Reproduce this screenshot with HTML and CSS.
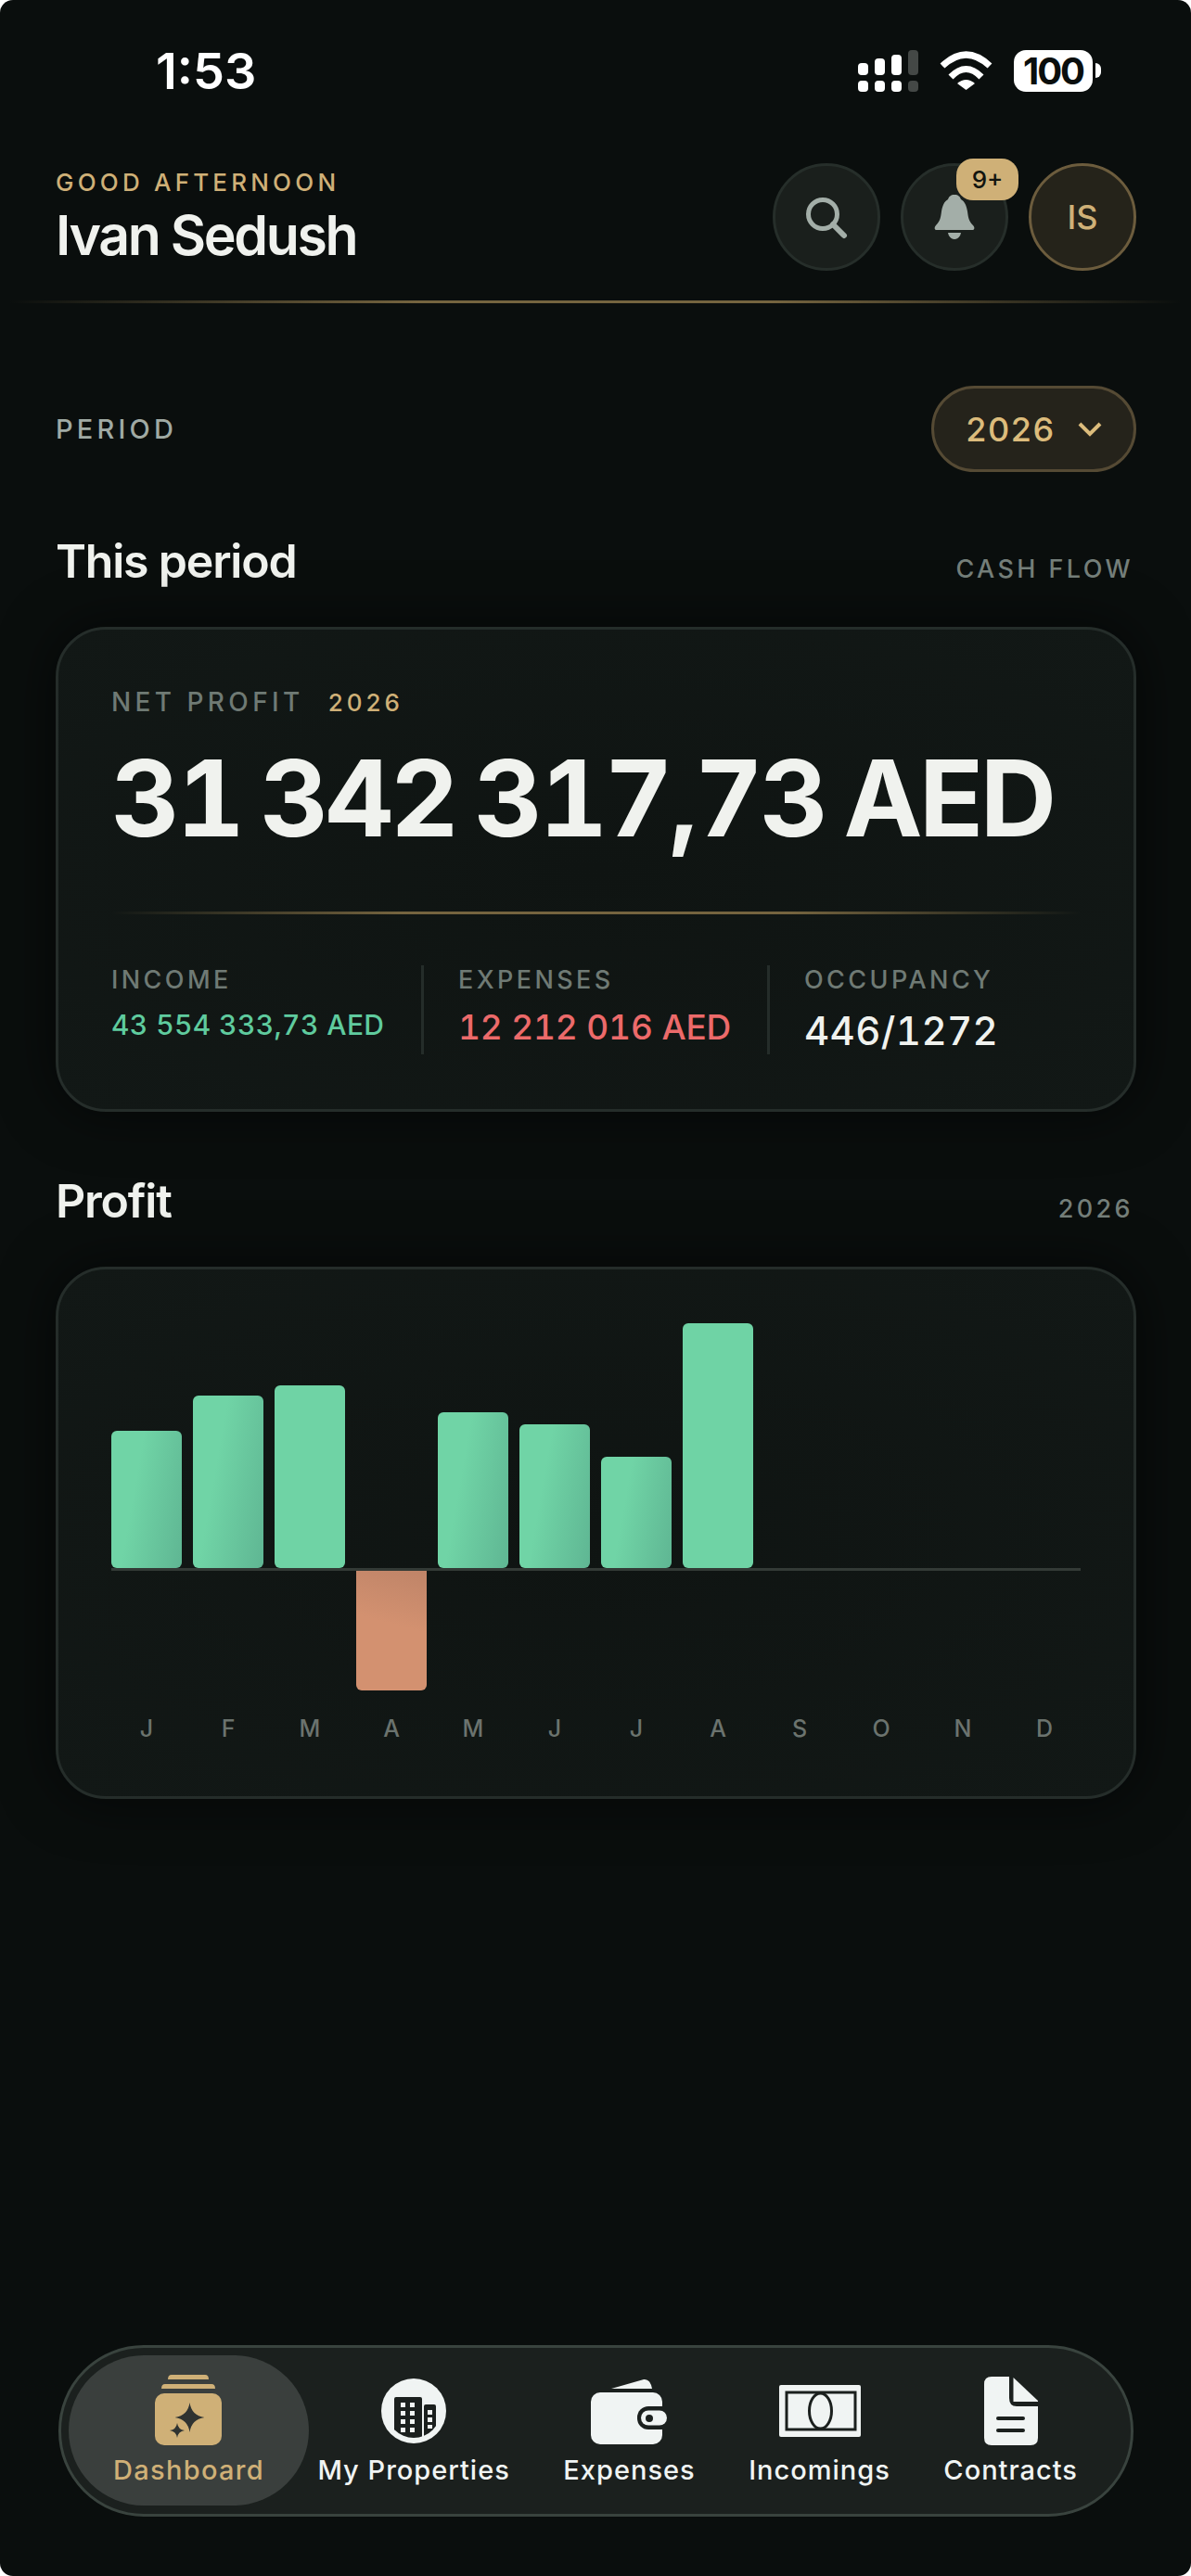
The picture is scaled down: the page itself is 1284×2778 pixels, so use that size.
FILE: index.html
```html
<!DOCTYPE html>
<html lang="en">
<head>
    <meta charset="UTF-8">
    <meta name="viewport" content="width=device-width, initial-scale=1.0">
    <title>Dashboard</title>
    <link rel="stylesheet" href="styles.css">
</head>
<body>
<div class="screen">
    <div class="status-bar">
        <span class="time">1:53</span>
        <div class="status-icons">
            <svg class="signal" width="65" height="45" viewBox="0 0 65 45">
                <rect x="0" y="14" width="11" height="13" rx="4" fill="#fff"/>
                <rect x="18" y="9" width="11" height="18" rx="4" fill="#fff"/>
                <rect x="36" y="5" width="11" height="22" rx="4" fill="#fff"/>
                <rect x="54" y="0" width="11" height="27" rx="4" fill="#444846"/>
                <rect x="0" y="33" width="11" height="12" rx="4" fill="#fff"/>
                <rect x="18" y="33" width="11" height="12" rx="4" fill="#fff"/>
                <rect x="36" y="33" width="11" height="12" rx="4" fill="#fff"/>
                <rect x="54" y="33" width="11" height="12" rx="4" fill="#444846"/>
            </svg>
            <svg class="wifi" width="57" height="42" viewBox="0 0 57 42">
                <path d="M3 16Q28.500 -8 54 16" fill="none" stroke="#fff" stroke-width="7"/>
                <path d="M12 28Q28.500 11 45 28" fill="none" stroke="#fff" stroke-width="7"/>
                <path d="M19 35Q28.500 27 38 35L28.500 42Z" fill="#fff"/>
            </svg>
            <div class="battery">
                <span class="battery-level">100</span>
                <span class="battery-nub"></span>
            </div>
        </div>
    </div>

    <header class="header">
        <div class="greeting">
            <div class="greeting-label">GOOD AFTERNOON</div>
            <div class="greeting-name">Ivan Sedush</div>
        </div>
        <div class="header-actions">
            <div class="round-btn">
                <svg width="50" height="50" viewBox="0 0 50 50" fill="none" stroke="#a3aea8">
                    <circle cx="21" cy="22" r="15.500" stroke-width="5"/>
                    <path d="M32 33L44 45" stroke-width="6" stroke-linecap="round"/>
                </svg>
            </div>
            <div class="round-btn">
                <svg width="44" height="48" viewBox="0 0 44 48" fill="#a3aea8">
                    <path d="M22 0C26 0 28 2 29 5C33 7 35 12 36 18C37 26 38 29 42 33C44 35 44 38 41 38H3C0 38 0 35 2 33C6 29 7 26 8 18C9 12 11 7 15 5C16 2 18 0 22 0Z"/>
                    <path d="M15 41H29C28 46 25 48 22 48C19 48 16 46 15 41Z"/>
                </svg>
                <span class="badge">9+</span>
            </div>
            <div class="round-btn avatar">IS</div>
        </div>
    </header>
    <div class="gold-rule header-rule"></div>

    <div class="period-row">
        <span class="period-label">PERIOD</span>
        <div class="period-pill">
            <span>2026</span>
            <svg width="26" height="16" viewBox="0 0 26 16" fill="none" stroke="#dcbc7c" stroke-width="4">
                <path d="M2 2L13 13L24 2"/>
            </svg>
        </div>
    </div>

    <div class="section-head">
        <h2>This period</h2>
        <span class="section-note">CASH FLOW</span>
    </div>
    <section class="card summary">
        <div class="summary-label">NET PROFIT <span class="summary-year">2026</span></div>
        <div class="summary-total">31 342 317,73 AED</div>
        <div class="gold-rule summary-rule"></div>
        <div class="stats">
            <div class="stat">
                <div class="stat-label">INCOME</div>
                <div class="stat-value income">43 554 333,73 AED</div>
            </div>
            <div class="stat">
                <div class="stat-label">EXPENSES</div>
                <div class="stat-value expense">12 212 016 AED</div>
            </div>
            <div class="stat">
                <div class="stat-label">OCCUPANCY</div>
                <div class="stat-value occupancy">446/1272</div>
            </div>
        </div>
    </section>

    <div class="section-head">
        <h2>Profit</h2>
        <span class="section-note">2026</span>
    </div>
    <section class="card chart-card">
        <div class="chart-grid chart-up">
            <div class="bar" style="height: 148px"></div>
            <div class="bar" style="height: 186px"></div>
            <div class="bar flat" style="height: 197px"></div>
            <div></div>
            <div class="bar" style="height: 168px"></div>
            <div class="bar" style="height: 155px"></div>
            <div class="bar" style="height: 120px"></div>
            <div class="bar flat" style="height: 264px"></div>
        </div>
        <div class="chart-axis"></div>
        <div class="chart-grid chart-down">
            <div></div><div></div><div></div>
            <div class="bar loss" style="height: 129px"></div>
        </div>
        <div class="chart-grid months">
            <span>J</span><span>F</span><span>M</span><span>A</span><span>M</span><span>J</span>
            <span>J</span><span>A</span><span>S</span><span>O</span><span>N</span><span>D</span>
        </div>
    </section>

    <nav class="tabbar">
        <div class="tab active">
            <svg width="72" height="76" viewBox="0 0 72 76">
                <path d="M14 5Q14 0 18 0H54Q58 0 58 5Z" fill="#cfb077"/>
                <path d="M7 15Q7 10 11 10H61Q65 10 65 15Z" fill="#cfb077"/>
                <rect x="0" y="20" width="72" height="56" rx="10" fill="#cfb077"/>
                <path d="M37.500 30Q39.500 44 53.500 46Q39.500 48 37.500 62Q35.500 48 21.500 46Q35.500 44 37.500 30Z" fill="#2f3331"/>
                <path d="M24 52Q25 59 32 60Q25 61 24 68Q23 61 16 60Q23 59 24 52Z" fill="#2f3331"/>
            </svg>
            <span>Dashboard</span>
        </div>
        <div class="tab">
            <svg width="70" height="76" viewBox="0 0 70 76">
                <defs><clipPath id="towerClip"><circle cx="35" cy="39" r="29"/></clipPath></defs>
                <circle cx="35" cy="39" r="35" fill="#f0f4f3"/>
                <g clip-path="url(#towerClip)" fill="#1b201e">
                    <rect x="14" y="24" width="30" height="52" rx="2"/>
                    <rect x="46" y="32" width="13" height="44" rx="2"/>
                </g>
                <g fill="#f0f4f3">
                    <rect x="21" y="30" width="5" height="5"/><rect x="31" y="30" width="5" height="5"/>
                    <rect x="21" y="39" width="5" height="5"/><rect x="31" y="39" width="5" height="5"/>
                    <rect x="21" y="48" width="5" height="5"/><rect x="31" y="48" width="5" height="5"/>
                    <rect x="21" y="57" width="5" height="5"/><rect x="31" y="57" width="5" height="5"/>
                    <rect x="50" y="38" width="5" height="5"/><rect x="50" y="46" width="5" height="5"/>
                    <rect x="50" y="54" width="5" height="4"/>
                </g>
            </svg>
            <span>My Properties</span>
        </div>
        <div class="tab">
            <svg width="82" height="76" viewBox="0 0 82 76">
                <path d="M22 15L57 5Q64 4 66 15Z" fill="#f0f4f3"/>
                <rect x="0" y="19" width="77" height="56" rx="10" fill="#f0f4f3"/>
                <rect x="50" y="34" width="50" height="25" rx="12" fill="#1b201e"/>
                <rect x="54" y="38.500" width="28" height="16" rx="8" fill="#f0f4f3"/>
                <circle cx="63" cy="47" r="4" fill="#1b201e"/>
            </svg>
            <span>Expenses</span>
        </div>
        <div class="tab">
            <svg width="88" height="76" viewBox="0 0 88 76">
                <rect x="0" y="11" width="88" height="56" rx="2" fill="#f0f4f3"/>
                <rect x="8" y="19" width="74" height="40" fill="none" stroke="#1b201e" stroke-width="3"/>
                <ellipse cx="44.500" cy="39" rx="12" ry="19" fill="#f0f4f3" stroke="#1b201e" stroke-width="3"/>
            </svg>
            <span>Incomings</span>
        </div>
        <div class="tab">
            <svg width="58" height="76" viewBox="0 0 58 76">
                <path d="M8 2H27V25Q27 34 35 34H58V68Q58 76 50 76H8Q0 76 0 68V10Q0 2 8 2Z" fill="#f0f4f3"/>
                <path d="M31.500 3L58 28V29H31.500Z" fill="#f0f4f3"/>
                <rect x="13" y="45" width="31" height="4" rx="2" fill="#1b201e"/>
                <rect x="13" y="58" width="31" height="4" rx="2" fill="#1b201e"/>
            </svg>
            <span>Contracts</span>
        </div>
    </nav>
</div>
</body>
</html>
```

FILE: styles.css
```css
* {
    box-sizing: border-box;
}
html, body {
    margin: 0;
    background: #fff;
}
body {
    font-family: Inter, "Noto Sans", sans-serif;
    color: #f0f2ee;
}
.screen {
    width: 1284px;
    height: 2778px;
    padding: 0 59px 64px 60px;
    background: #0a0e0d;
    border-radius: 14px;
    display: flex;
    flex-direction: column;
    overflow: hidden;
}

/* status bar */
.status-bar {
    height: 152px;
    display: flex;
    align-items: center;
    justify-content: space-between;
    padding: 0 38px 0 108px;
}
.time {
    font-size: 54px;
    font-weight: 600;
    color: #fff;
}
.status-icons {
    display: flex;
    align-items: center;
    gap: 23px;
}
.battery {
    display: flex;
    align-items: center;
    gap: 3px;
}
.battery-level {
    width: 85px;
    height: 45px;
    border-radius: 13px;
    background: #fff;
    color: #0a0e0d;
    font-size: 40px;
    font-weight: 700;
    letter-spacing: -2px;
    line-height: 45px;
    text-align: center;
}
.battery-nub {
    width: 6px;
    height: 16px;
    background: #fff;
    border-radius: 0 8px 8px 0;
}

/* header */
.header {
    margin-top: 24px;
    height: 116px;
    display: flex;
    align-items: center;
    justify-content: space-between;
}
.greeting-label {
    font-size: 26px;
    line-height: 32px;
    font-weight: 500;
    letter-spacing: 4.200px;
    color: #cfb077;
}
.greeting-name {
    font-size: 59px;
    line-height: 66px;
    font-weight: 600;
    letter-spacing: -2.400px;
    margin-top: 8px;
}
.header-actions {
    display: flex;
    gap: 22px;
}
.round-btn {
    position: relative;
    width: 116px;
    height: 116px;
    border-radius: 50%;
    background: #1a1f1c;
    border: 3px solid #262e2a;
    display: flex;
    align-items: center;
    justify-content: center;
}
.avatar {
    background: #25231a;
    border-color: #6c5c3d;
    color: #cfb077;
    font-size: 36px;
    font-weight: 500;
}
.badge {
    position: absolute;
    top: -8px;
    right: -14px;
    width: 67px;
    height: 45px;
    border-radius: 18px;
    background: #cfb077;
    color: #12140f;
    font-size: 26px;
    font-weight: 500;
    line-height: 45px;
    text-align: center;
}
.gold-rule {
    height: 3px;
    background: linear-gradient(90deg, transparent, #75643f 35%, #75643f 65%, transparent);
}
.header-rule {
    margin: 32px -49px 0 -50px;
}

/* period */
.period-row {
    margin-top: 89px;
    display: flex;
    align-items: center;
    justify-content: space-between;
}
.period-label {
    font-size: 29px;
    font-weight: 500;
    letter-spacing: 4.200px;
    color: #a0aaa4;
}
.period-pill {
    width: 221px;
    height: 93px;
    border-radius: 47px;
    background: #25231b;
    border: 3px solid #554a34;
    display: flex;
    align-items: center;
    justify-content: center;
    gap: 24px;
    color: #dcbc7c;
    font-size: 36px;
    font-weight: 500;
    letter-spacing: 1.500px;
}

/* sections */
.section-head {
    margin-top: 66px;
    display: flex;
    align-items: baseline;
    justify-content: space-between;
}
.section-head h2 {
    margin: 0;
    font-size: 50px;
    line-height: 60px;
    font-weight: 600;
    letter-spacing: -1.200px;
}
.section-note {
    font-size: 27px;
    font-weight: 500;
    letter-spacing: 3.400px;
    color: #757f7a;
    margin-right: 3px;
}
.card {
    margin-top: 41px;
    border: 3px solid #252d2a;
    border-radius: 54px;
    background: radial-gradient(ellipse at center, #0f1412 0%, #121816 100%);
    box-shadow: 0 0 60px rgba(0, 0, 0, 0.6);
}

/* net profit card */
.summary {
    height: 523px;
    padding: 62px 57px 0;
}
.summary-label {
    font-size: 28px;
    line-height: 32px;
    font-weight: 500;
    letter-spacing: 4.400px;
    color: #6f7a74;
}
.summary-year {
    margin-left: 14px;
    color: #cfb077;
    font-size: 26px;
    letter-spacing: 4px;
}
.summary-total {
    margin-top: 27px;
    font-size: 114px;
    line-height: 120px;
    font-weight: 700;
    font-variant-numeric: tabular-nums;
    letter-spacing: -3.500px;
    word-spacing: -7px;
    white-space: nowrap;
}
.summary-rule {
    margin-top: 62px;
    background: linear-gradient(90deg, transparent, #75643f 30%, #75643f 70%, transparent);
}
.stats {
    margin-top: 55px;
    display: grid;
    grid-template-columns: 334px 373px 1fr;
    height: 96px;
}
.stat + .stat {
    border-left: 3px solid #252d2a;
    padding-left: 37px;
}
.stat-label {
    font-size: 27px;
    line-height: 32px;
    font-weight: 500;
    letter-spacing: 3.400px;
    color: #6f7a74;
}
.stat-value {
    margin-top: 14px;
    white-space: nowrap;
    font-weight: 500;
    font-variant-numeric: tabular-nums;
}
.income {
    font-size: 30px;
    line-height: 36px;
    letter-spacing: 0.400px;
    color: #5fcb9e;
}
.expense {
    margin-top: 13px;
    font-size: 37px;
    line-height: 44px;
    letter-spacing: -0.200px;
    color: #ec6a6a;
}
.occupancy {
    font-size: 42px;
    line-height: 48px;
    letter-spacing: 0.400px;
    margin-top: 15px;
}

/* profit chart */
.chart-card {
    height: 574px;
    padding: 58px 57px 0;
}
.chart-grid {
    display: grid;
    grid-template-columns: repeat(12, 76px);
    gap: 12px;
}
.chart-up {
    height: 264px;
    align-items: end;
}
.chart-down {
    height: 129px;
}
.chart-axis {
    height: 3px;
    background: #333a36;
}
.bar {
    border-radius: 6px;
    background: linear-gradient(100deg, #70d4a6 35%, #5fb693 100%);
}
.bar.flat {
    background: #6fd3a5;
}
.bar.loss {
    border-radius: 0 0 6px 6px;
    background: linear-gradient(15deg, #d39170 55%, #bf8468 100%);
}
.months {
    margin-top: 26px;
    text-align: center;
    font-size: 25px;
    line-height: 30px;
    font-weight: 500;
    color: #6b736e;
}

/* bottom tabs */
.tabbar {
    margin: auto 3px 0;
    height: 185px;
    padding: 8px;
    border: 3px solid #39433e;
    border-radius: 92px;
    background: #1b201e;
    display: flex;
    gap: 57.500px;
}
.tab {
    display: flex;
    flex-direction: column;
    align-items: center;
    padding-top: 21px;
    font-size: 29px;
    line-height: 34px;
    font-weight: 500;
    letter-spacing: 1px;
    color: #f0f4f3;
    white-space: nowrap;
}
.tab svg {
    display: block;
    margin-bottom: 10px;
}
.tab.active {
    padding: 21px 48px 0;
    margin-right: -48px;
    height: 162px;
    border-radius: 81px;
    background: #3a3f3d;
    color: #cfb077;
    letter-spacing: 1.300px;
}
```
